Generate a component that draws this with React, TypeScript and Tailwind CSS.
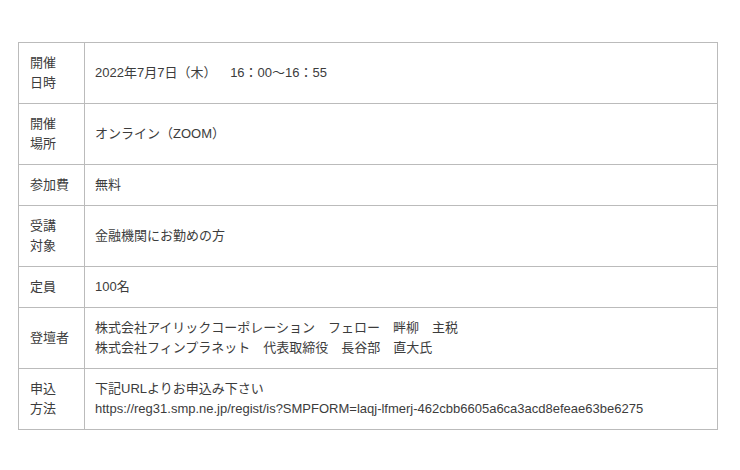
import React from "react";

const rows: { label: React.ReactNode; value: React.ReactNode }[] = [
  { label: <>開催<br />日時</>, value: <>2022年7月7日（木）{"\u3000\u00a0\u00a0"}16：00〜16：55</> },
  { label: <>開催<br />場所</>, value: <>オンライン（ZOOM）</> },
  { label: <>参加費</>, value: <>無料</> },
  { label: <>受講<br />対象</>, value: <>金融機関にお勤めの方</> },
  { label: <>定員</>, value: <>100名</> },
  {
    label: <>登壇者</>,
    value: (
      <>
        株式会社アイリックコーポレーション　フェロー　畔柳　主税
        <br />
        株式会社フィンプラネット　代表取締役　長谷部　直大氏
      </>
    ),
  },
  {
    label: <>申込<br />方法</>,
    value: (
      <>
        下記URLよりお申込み下さい
        <br />
        https://reg31.smp.ne.jp/regist/is?SMPFORM=laqj-lfmerj-462cbb6605a6ca3acd8efeae63be6275
      </>
    ),
  },
];

export default function App() {
  return (
    <div
      className="w-[740px] h-[470px] bg-white pt-[42px] pl-[18px]"
      style={{ fontFamily: '"Liberation Sans", "Noto Sans CJK JP", sans-serif' }}
    >
      <div className="w-[700px] border border-[#bbbbbb] text-[13px] leading-[20px] text-[#3c3c3c]">
        {rows.map((r, i) => (
          <div
            key={i}
            className={`flex ${i < rows.length - 1 ? "border-b border-[#bbbbbb]" : ""}`}
          >
            <div className="w-[66px] shrink-0 border-r border-[#bbbbbb] pl-[11px] py-[10px] flex items-center">
              <div>{r.label}</div>
            </div>
            <div className="flex-1 pl-[10px] py-[10px] flex items-center">
              <div>{r.value}</div>
            </div>
          </div>
        ))}
      </div>
    </div>
  );
}
